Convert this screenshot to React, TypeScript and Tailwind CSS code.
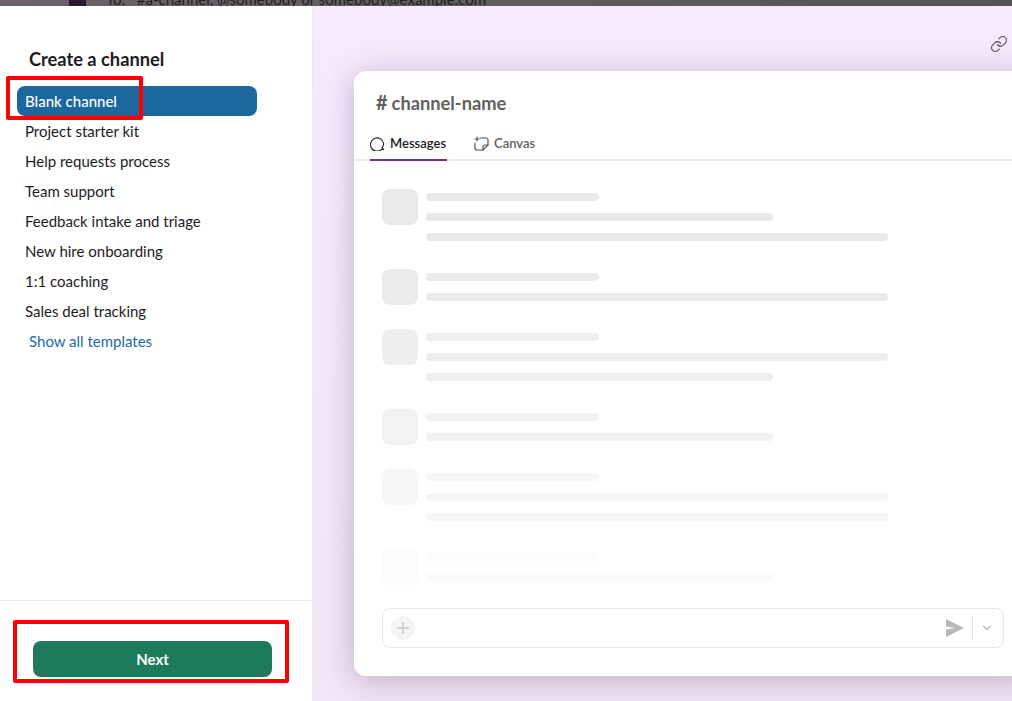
import React from "react";
import { Link, ChevronDown, Plus } from "lucide-react";

const items = ["Project starter kit", "Help requests process", "Team support", "Feedback intake and triage", "New hire onboarding", "1:1 coaching", "Sales deal tracking"];

const L = "w-[173px]";
const M = "w-[347px]";
const XL = "w-[462px]";

const rows: { lines: string[]; avatar: string; line: string }[] = [
  { lines: [L, M, XL], avatar: "bg-[#e9e9e9]", line: "bg-[#e9e9e9]" },
  { lines: [L, XL], avatar: "bg-[#ebebeb]", line: "bg-[#ebebeb]" },
  { lines: [L, XL, M], avatar: "bg-[#eeeeee]", line: "bg-[#eeeeee]" },
  { lines: [L, M], avatar: "bg-[#f2f2f2]", line: "bg-[#f2f2f2]" },
  { lines: [L, XL, XL], avatar: "bg-[#f6f6f6]", line: "bg-[#f6f6f6]" },
  { lines: [L, M], avatar: "bg-[#fbfbfb]", line: "bg-[#fbfbfb]" },
];

export default function App() {
  return (
    <div className="relative flex flex-col w-[1012px] h-[701px] overflow-hidden bg-white text-[15px] text-[#1d1c1d]" style={{ fontFamily: '"Lato", "Liberation Sans", sans-serif' }}>
      <div className="flex h-[6px] shrink-0 overflow-hidden bg-gradient-to-r from-[#6b6269] to-[#555555]">
        <div className="ml-[69px] w-[17px] bg-[#2a1b2c]" />
        <div className="ml-[20px] -mt-[11px] leading-[20px] text-[15px] text-[#1f1f1f] whitespace-nowrap">To:&nbsp;&nbsp;&nbsp;#a-channel, @somebody or somebody@example.com</div>
      </div>
      <div className="flex flex-1 min-h-0">
        <aside className="flex flex-col w-[313px] shrink-0 border-r border-[#ebebeb] bg-white">
          <div className="flex-1 pt-[39px]">
            <h1 className="pl-[29px] text-[18.25px] leading-[28px] font-bold text-[#1d1c1d]">Create a channel</h1>
            <div className="mt-[13px] pl-[17px] pr-[55px]">
              <div className="flex items-center h-[30px] pl-2 rounded-lg bg-[#1d679f] text-white font-medium">Blank channel</div>
              {items.map((t) => (
                <div key={t} className="flex items-center h-[30px] pl-2">{t}</div>
              ))}
              <div className="flex items-center h-[30px] pl-3 text-[#1d6ba6]">Show all templates</div>
            </div>
          </div>
          <div className="h-[101px] shrink-0 border-t border-[#ebebeb] pt-[40px] pl-[33px]">
            <button className="w-[239px] h-[36px] rounded-lg bg-[#1d7a5c] text-white font-bold">Next</button>
          </div>
        </aside>
        <main className="relative flex-1 min-w-0 overflow-hidden bg-gradient-to-b from-[#f7eafe] to-[#f2e5f8] pl-[41px] pt-[65px]">
          <Link className="absolute right-[4px] top-[29px] w-[18px] h-[18px] text-[#5e5d60]" strokeWidth={1.75} />
          <div className="flex flex-col w-[680px] h-[605px] rounded-xl bg-white shadow-[0_4px_32px_rgba(60,30,70,0.28)]">
            <div className="pl-[22px] pt-[19px] h-[57px] text-[18.25px] leading-[24px] font-bold text-[#616061]">
              <span className="text-[20px] mr-[4px]">#</span>channel-name
            </div>
            <div className="flex h-[33px] pl-4 border-b-2 border-[#ebebeb] text-[13px] font-semibold">
              <div className="flex items-center gap-[5px] h-[33px] w-[77px] border-b-2 border-[#7c3085] text-[#1d1c1d]">
                <svg width="15" height="15" viewBox="0 0 15 15" fill="none" stroke="#2b2a2c" strokeWidth="1.2">
                  <path d="M13.6 13.6l-1.7-.5A6.6 6.6 0 1 1 13.6 7.5c0 1.7-.5 3-1.5 4.2z" strokeLinejoin="round" />
                </svg>
                Messages
              </div>
              <div className="flex items-center gap-[5px] h-[31px] ml-[27px] text-[#616061]">
                <svg width="15" height="15" viewBox="0 0 15 15" fill="none" stroke="#555" strokeWidth="1.2" strokeLinecap="round" strokeLinejoin="round">
                  <path d="M1 7v5a2 2 0 0 0 2 2h6l5-5V4a2 2 0 0 0-2-2H6" />
                  <path d="M9 14v-3a2 2 0 0 1 2-2h3" />
                  <path d="M3 1v4M1 3h4" />
                </svg>
                Canvas
              </div>
            </div>
            <div className="flex-1 min-h-0 overflow-hidden pl-[28px] pt-[28px]">
              <div className="flex flex-col gap-6">
                {rows.map((r, i) => (
                  <div key={i} className="flex gap-2">
                    <div className={`w-9 h-9 rounded-lg shrink-0 ${r.avatar}`} />
                    <div className="flex flex-col gap-3 py-1">
                      {r.lines.map((w, j) => (
                        <div key={j} className={`h-2 rounded-full ${w} ${r.line}`} />
                      ))}
                    </div>
                  </div>
                ))}
              </div>
            </div>
            <div className="h-[68px] shrink-0 pl-[28px]">
              <div className="flex items-center w-[622px] h-[40px] rounded-lg border border-[#e8e8e8] bg-white">
                <div className="flex items-center justify-center ml-[8px] w-6 h-6 rounded-full bg-[#f5f5f5]">
                  <Plus className="w-[18px] h-[18px] text-[#c6c6c6]" strokeWidth={1.75} />
                </div>
                <svg className="ml-auto" width="18" height="18" viewBox="0 0 18 18">
                  <path d="M0 0 L18 9 L0 18 L0 10.5 L9 9 L0 7.5z" fill="#b8b8b8" />
                </svg>
                <div className="w-px h-6 bg-[#e2e2e2] ml-[8px]" />
                <ChevronDown className="w-[14px] h-[14px] ml-[7px] mr-[9px] text-[#b5b5b5]" />
              </div>
            </div>
          </div>
        </main>
      </div>
      <div className="absolute left-[6px] top-[76px] w-[137px] h-[44px] rounded-[2px] border-4 border-[#ff0000]" />
      <div className="absolute left-[13px] top-[620px] w-[276px] h-[63px] rounded-[2px] border-4 border-[#ff0000]" />
    </div>
  );
}
